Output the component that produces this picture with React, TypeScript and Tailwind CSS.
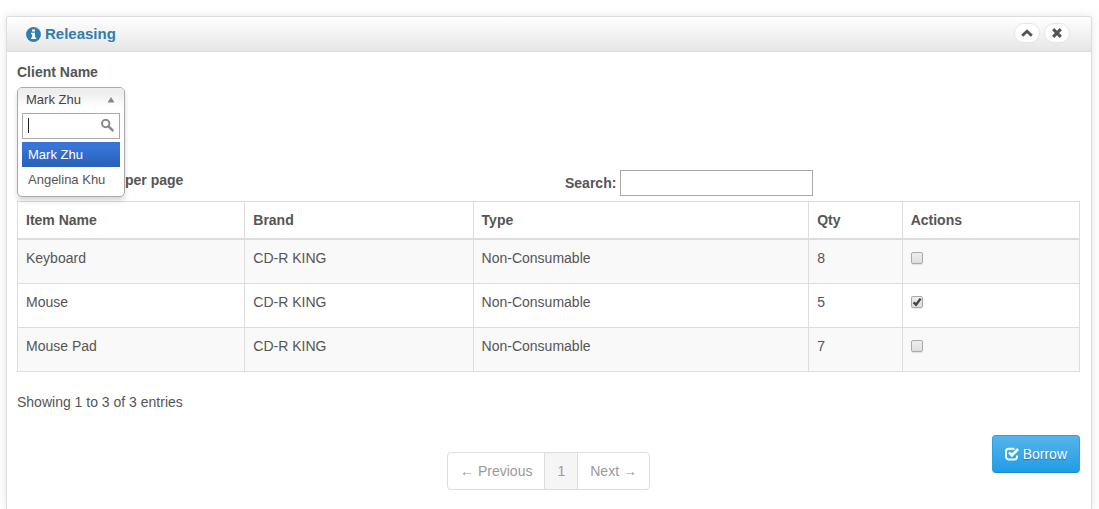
import React, { useState } from 'react';

const items = [
  { name: 'Keyboard', brand: 'CD-R KING', type: 'Non-Consumable', qty: 8, picked: false },
  { name: 'Mouse', brand: 'CD-R KING', type: 'Non-Consumable', qty: 5, picked: true },
  { name: 'Mouse Pad', brand: 'CD-R KING', type: 'Non-Consumable', qty: 7, picked: false },
];

const clients = ['Mark Zhu', 'Angelina Khu'];

const InfoIcon = () => (
  <svg viewBox="0 0 15 15" className="size-[15px]" aria-hidden="true">
    <circle cx="7.5" cy="7.5" r="7.4" fill="#317eac" />
    <path d="M6 2.6h3v2H6zM5 5.8h4v4.7h1.200V12H5v-1.500h1.200V7.200H5z" fill="#fff" />
  </svg>
);

const ChevronUpIcon = () => (
  <svg viewBox="0 0 12 12" className="size-3" aria-hidden="true">
    <path d="M1.200 8.800 6 4.200l4.800 4.600" fill="none" stroke="#555" strokeWidth="2.900" />
  </svg>
);

const CloseIcon = () => (
  <svg viewBox="0 0 12 12" className="size-3" aria-hidden="true">
    <path d="m2.200 2.200 7.600 7.600M9.800 2.200 2.200 9.800" stroke="#555" strokeWidth="3.100" />
  </svg>
);

const SearchIcon = () => (
  <svg viewBox="0 0 13 13" className="absolute right-[6px] top-[6px] size-[13px]" aria-hidden="true">
    <circle cx="4.700" cy="4.500" r="3.700" fill="none" stroke="#888" strokeWidth="2" />
    <path d="m7.600 7.400 4 3.900" stroke="#888" strokeWidth="2.500" strokeLinecap="round" />
  </svg>
);

const CheckIcon = () => (
  <svg viewBox="0 0 14 14" className="size-[14px]" aria-hidden="true">
    <path
      d="M9.500 1.700H3.800A2.800 2.800 0 0 0 1 4.500v5.200a2.800 2.800 0 0 0 2.800 2.800h5.400a2.800 2.800 0 0 0 2.800-2.800V8.400"
      fill="none"
      stroke="#fff"
      strokeWidth="1.900"
    />
    <path d="m4 5.400 2.900 2.900 6.200-6.300" fill="none" stroke="#fff" strokeWidth="2.600" />
  </svg>
);

const ClientSelect: React.FC = () => {
  const [client, setClient] = useState('Mark Zhu');

  return (
    <div className="relative mt-[5px] h-[26px] w-[108px]">
      <div className="absolute inset-x-0 top-0 rounded-[5px] border border-[#aaa] bg-white text-[13px] shadow-[0_4px_5px_rgba(0,0,0,0.15)]">
        <button
          id="client"
          type="button"
          aria-expanded="true"
          className="flex h-6 w-full items-center justify-between rounded-t-[4px] bg-linear-to-b from-[#eee] from-20% to-white to-80% pl-2 pr-[9px] text-[#444]"
        >
          {client}
          <svg viewBox="0 0 8 6" className="h-[6px] w-2" aria-hidden="true">
            <path d="m4 0 3.500 5.500h-7z" fill="#888" />
          </svg>
        </button>
        <div className="relative mx-1 mt-px">
          <input
            type="text"
            aria-label="Find client"
            className="block h-[26px] w-full border border-[#aaa] bg-white pl-[5px] pr-5 outline-none"
          />
          <span className="absolute left-[6px] top-[5px] h-[15px] w-px bg-[#222]" />
          <SearchIcon />
        </div>
        <ul className="mx-1 mb-1 mt-[3px]">
          {clients.map((c) => (
            <li key={c}>
              <button
                type="button"
                onClick={() => setClient(c)}
                className={
                  c === client
                    ? 'block h-[25px] w-full bg-linear-to-b from-[#3875d7] from-20% to-[#2a62bc] to-90% pl-[6px] text-left text-white'
                    : 'block h-[25px] w-full pl-[6px] text-left'
                }
              >
                {c}
              </button>
            </li>
          ))}
        </ul>
      </div>
    </div>
  );
};

const ItemCheckbox: React.FC<{ name: string; checked: boolean }> = ({ name, checked }) => (
  <label className="relative mt-1 block size-3">
    <input
      type="checkbox"
      aria-label={name}
      defaultChecked={checked}
      className="peer block size-3 appearance-none rounded-[2px] border border-[#aaa] bg-linear-to-b from-[#ededed] to-[#dedede] shadow-[0_1px_1px_rgba(0,0,0,0.1)]"
    />
    <svg viewBox="0 0 12 12" className="pointer-events-none absolute inset-0 hidden size-3 peer-checked:block" aria-hidden="true">
      <path d="m2.600 6.300 2.500 2.300 4.500-6" fill="none" stroke="#444" strokeWidth="2.400" />
    </svg>
  </label>
);

const ItemTable = () => (
  <table className="w-full table-fixed border-collapse border border-[#ddd] text-left">
    <colgroup>
      <col className="w-[21.4%]" />
      <col className="w-[21.5%]" />
      <col className="w-[31.6%]" />
      <col className="w-[8.8%]" />
      <col />
    </colgroup>
    <thead>
      <tr>
        {['Item Name', 'Brand', 'Type', 'Qty', 'Actions'].map((h) => (
          <th key={h} className="border border-b-2 border-[#ddd] p-2 font-bold">{h}</th>
        ))}
      </tr>
    </thead>
    <tbody>
      {items.map((item) => (
        <tr key={item.name} className="odd:bg-[#f9f9f9] [&>td]:border [&>td]:border-[#ddd] [&>td]:px-2 [&>td]:pb-[15px] [&>td]:pt-2 [&>td]:align-top">
          <td>{item.name}</td>
          <td>{item.brand}</td>
          <td>{item.type}</td>
          <td>{item.qty}</td>
          <td>
            <ItemCheckbox name={item.name} checked={item.picked} />
          </td>
        </tr>
      ))}
    </tbody>
  </table>
);

const Pagination = () => (
  <nav className="col-start-2 mt-[17px] flex divide-x divide-[#ddd] overflow-hidden rounded-[4px] border border-[#ddd] text-[#999]">
    <a href="#previous" className="px-3 py-2">← Previous</a>
    <a href="#1" className="bg-[#f5f5f5] px-3 py-2">1</a>
    <a href="#next" className="px-3 py-2">Next →</a>
  </nav>
);

const App: React.FC = () => {
  return (
    <div className="flex min-h-screen flex-col bg-white pl-[6px] pr-[7px] pt-4 font-['Liberation_Sans',Arial,sans-serif] text-[14px] leading-5 text-[#555]">
      <section className="flex-1 rounded-t-[3px] border border-b-0 border-[#ddd] shadow-[0_0_10px_rgba(189,189,189,0.4)]">
        <header className="flex h-[35px] items-start justify-between rounded-t-[3px] border-b border-[#ddd] bg-linear-to-b from-white to-[#e6e6e6] pl-[19px] pr-[21px] pt-[6px]">
          <h2 className="flex items-center gap-1 pt-px text-[15px] font-bold text-[#317eac]">
            <InfoIcon />
            Releasing
          </h2>
          <div className="flex gap-1">
            <button type="button" aria-label="Collapse" className="flex h-5 w-[26px] items-center justify-center rounded-full border border-[#e6e6e6] bg-white">
              <ChevronUpIcon />
            </button>
            <button type="button" aria-label="Close" className="flex h-5 w-[26px] items-center justify-center rounded-full border border-[#e6e6e6] bg-white">
              <CloseIcon />
            </button>
          </div>
        </header>

        <div className="p-[10px] pr-[11px]">
          <label htmlFor="client" className="block font-bold">Client Name</label>
          <ClientSelect />

          <div className="mt-[57px] grid grid-cols-2 gap-[33px]">
            <span className="pl-[108px] font-bold">per page</span>
            <label className="flex items-center gap-1 font-bold">
              Search:
              <input type="search" className="h-[26px] w-[193px] border border-[#a9a9a9] bg-white px-1 font-normal outline-none" />
            </label>
          </div>

          <div className="mt-[5px]">
            <ItemTable />
          </div>

          <p className="mt-5">Showing 1 to 3 of 3 entries</p>

          <div className="mt-[23px] grid grid-cols-[1fr_auto_1fr] items-start">
            <Pagination />
            <button
              type="button"
              className="flex items-center gap-1 justify-self-end rounded-[4px] border border-[#2f9fe0] border-b-[#178acc] bg-linear-to-b from-[#54b4eb] to-[#1d9ce5] px-3 py-2 text-white [text-shadow:0_1px_1px_rgba(0,0,0,0.3)]"
            >
              <CheckIcon />
              Borrow
            </button>
          </div>
        </div>
      </section>
    </div>
  );
};

export default App;
